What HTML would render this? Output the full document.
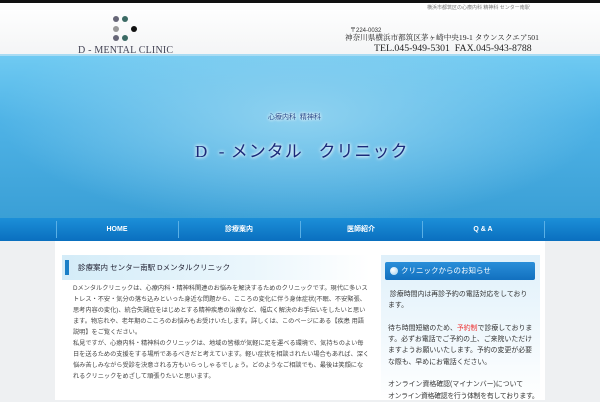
<!DOCTYPE html>
<html><head><meta charset="utf-8"><style>
*{margin:0;padding:0;box-sizing:border-box}
body{width:600px;height:400px;overflow:hidden;background:#eef0f2;font-family:"Liberation Sans","Noto Sans CJK JP",sans-serif;position:relative}
.abs{position:absolute;white-space:nowrap}
#top{left:0;top:0;width:600px;height:3px;background:#111}
#head{left:0;top:3px;width:600px;height:53px;background:linear-gradient(#fff,#f4f5f6);border-bottom:2px solid #a9dcf3}
.dot{position:absolute;width:6px;height:6px;border-radius:50%}
#hero{left:0;top:56px;width:600px;height:162px;background:radial-gradient(ellipse 300px 110px at 300px 60px,#8fd2f0,rgba(100,190,235,0) 100%),linear-gradient(#6fcaf2 0%,#4fb3e6 40%,#3a9fd6 100%)}
#nav{left:0;top:218px;width:600px;height:23px;background:linear-gradient(#1c8fd8,#0a6fbf)}
.ni{position:absolute;top:0;height:23px;line-height:23px;color:#fff;font-size:7px;font-weight:bold;text-align:center;width:122px}
.sep{position:absolute;top:3px;width:1px;height:17px;background:#5ab0e6}
#col{left:55px;top:241px;width:490px;height:159px;background:#fff}
#mt{left:62px;top:255px;width:308px;height:25px;background:linear-gradient(90deg,#d4ecf8,#eaf6fc 60%,#fff)}
#mtb{left:65px;top:260px;width:4px;height:15px;background:#1a7fc7}
#mtt{left:78px;top:262px;font-size:7.5px;color:#223}
#body{left:73px;top:283px;width:296px;font-size:6.2px;line-height:11px;color:#444;white-space:normal}
#side{left:381px;top:255px;width:159px;height:145px;background:linear-gradient(#dff0fa,#fff)}
#st{left:385px;top:262px;width:150px;height:18px;border-radius:2px;background:linear-gradient(#2a8fd9,#1270bf);color:#fff;font-size:7.5px;line-height:18px;padding-left:16px}
#st:before{content:"";position:absolute;left:5px;top:5px;width:8px;height:8px;border-radius:50%;background:radial-gradient(circle at 35% 35%,#fff,#9fd0ee)}
#sb{left:388px;top:289px;width:146px;font-size:6.9px;line-height:11.3px;color:#333;white-space:normal}
</style></head><body>
<div class="abs" id="top"></div>
<div class="abs" id="head"></div>
<div class="dot" style="left:113px;top:16px;background:#667"></div>
<div class="dot" style="left:122px;top:16px;background:#3b6a64"></div>
<div class="dot" style="left:113px;top:26px;background:#999"></div>
<div class="dot" style="left:131px;top:26px;background:#111"></div>
<div class="dot" style="left:113px;top:35px;background:#667"></div>
<div class="dot" style="left:122px;top:35px;background:#3b6a64"></div>
<div class="abs" style="left:78px;top:45px;font-family:'Liberation Serif',serif;font-size:10px;color:#445;letter-spacing:.2px">D - MENTAL CLINIC</div>
<div class="abs" style="left:427px;top:4px;font-size:5px;color:#777">横浜市都筑区の心療内科 精神科 センター南駅</div>
<div class="abs" style="left:350px;top:25px;font-size:6px;color:#333">〒224-0032</div>
<div class="abs" style="left:345px;top:32px;font-size:7.6px;color:#222;font-family:'Liberation Serif','Noto Serif CJK SC',serif">神奈川県横浜市都筑区茅ヶ崎中央19-1 タウンスクエア501</div>
<div class="abs" style="left:374px;top:43px;font-size:9.8px;color:#222;font-family:'Liberation Serif',serif">TEL.045-949-5301&nbsp; FAX.045-943-8788</div>
<div class="abs" id="hero"></div>
<div class="abs" style="left:268px;top:112px;font-size:7px;color:#2a4a8a;text-shadow:0 0 3px #fff,0 0 3px #fff">心療内科&nbsp; 精神科</div>
<div class="abs" style="left:195px;top:137px;font-size:17px;letter-spacing:1px;color:#1a2a7a;text-shadow:0 0 3px #fff,0 0 4px #fff;font-family:'Liberation Serif','Noto Sans CJK JP',serif">D &nbsp;- メンタル&nbsp;&nbsp; クリニック</div>
<div class="abs" id="nav">
<div class="sep" style="left:56px"></div><div class="sep" style="left:178px"></div><div class="sep" style="left:300px"></div><div class="sep" style="left:422px"></div><div class="sep" style="left:544px"></div>
<div class="ni" style="left:56px">HOME</div><div class="ni" style="left:178px">診療案内</div><div class="ni" style="left:300px">医師紹介</div><div class="ni" style="left:422px">Q &amp; A</div>
</div>
<div class="abs" id="col"></div>
<div class="abs" id="mt"></div><div class="abs" id="mtb"></div>
<div class="abs" id="mtt">診療案内 センター南駅 Dメンタルクリニック</div>
<div class="abs" id="body">Dメンタルクリニックは、心療内科・精神科関連のお悩みを解決するためのクリニックです。現代に多いストレス・不安・気分の落ち込みといった身近な問題から、こころの変化に伴う身体症状(不眠、不安緊張、思考内容の変化)、統合失調症をはじめとする精神疾患の治療など、幅広く解決のお手伝いをしたいと思います。物忘れや、老年期のこころのお悩みもお受けいたします。詳しくは、このページにある【疾患 用語説明】をご覧ください。<br>私見ですが、心療内科・精神科のクリニックは、地域の皆様が気軽に足を運べる環境で、気持ちのよい毎日を送るための支援をする場所であるべきだと考えています。軽い症状を相談されたい場合もあれば、深く悩み苦しみながら受診を決意される方もいらっしゃるでしょう。どのようなご相談でも、最後は笑顔になれるクリニックをめざして頑張りたいと思います。</div>
<div class="abs" id="side"></div>
<div class="abs" id="st">クリニックからのお知らせ</div>
<div class="abs" id="sb">&nbsp;診療時間内は再診予約の電話対応をしております。<br><br>待ち時間短縮のため、<span style="color:#e33">予約制</span>で診療しております。必ずお電話でご予約の上、ご来院いただけますようお願いいたします。予約の変更が必要な際も、早めにお電話ください。<br><br>オンライン資格確認(マイナンバー)について<br><span style="white-space:nowrap;letter-spacing:-.3px">オンライン資格確認を行う体制を有しております。</span></div>
</body></html>
